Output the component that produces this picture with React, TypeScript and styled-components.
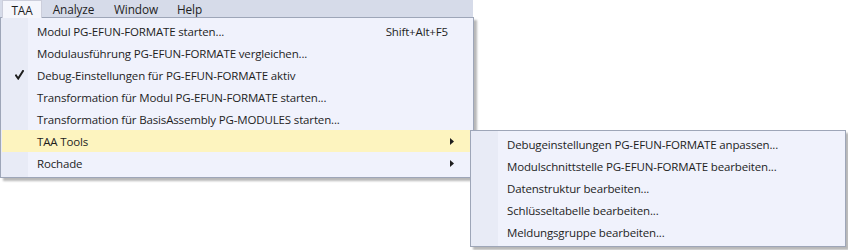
import React from "react";
import styled, { createGlobalStyle } from "styled-components";

const Global = createGlobalStyle`
  html, body { margin: 0; padding: 0; background: #ffffff; }
  body { font-family: "Open Sans", "Noto Sans", sans-serif; font-size: 12px; color: #1e1e1e; }
`;

const Page = styled.div`
  position: relative;
  width: 848px;
  height: 250px;
  background: #ffffff;
  overflow: hidden;
`;

const MenuBar = styled.div`
  display: flex;
  align-items: stretch;
  width: 473px;
  height: 17px;
  background: #d6dbe9;
  padding-left: 2px;
  box-sizing: border-box;
`;

const BarItem = styled.div<{ $open?: boolean; $w: number }>`
  width: ${(p) => p.$w}px;
  box-sizing: border-box;
  display: flex;
  align-items: center;
  justify-content: center;
  height: ${(p) => (p.$open ? "18px" : "17px")};
  background: ${(p) => (p.$open ? "#f5f6fc" : "transparent")};
  border: 1px solid ${(p) => (p.$open ? "#cccedb" : "transparent")};
  border-bottom: none;
  position: relative;
  z-index: 3;
  font-size: 11.8px;
  letter-spacing: -0.1px;
  line-height: 16px;
`;

const Dropdown = styled.div<{ $left: number; $top: number; $w: number }>`
  position: absolute;
  left: ${(p) => p.$left}px;
  top: ${(p) => p.$top}px;
  width: ${(p) => p.$w}px;
  box-sizing: border-box;
  background: linear-gradient(to right, #e8ebf6 0, #e8ebf6 27px, #f0f2fc 27px);
  border: 1px solid #9ea6b8;
  padding: 2px 1px 3px 1px;
  box-shadow: 3px 3px 2px rgba(0, 0, 0, 0.28);
  z-index: 2;
`;

const Item = styled.div<{ $hl?: boolean }>`
  display: grid;
  grid-template-columns: 33px 1fr auto 24px;
  align-items: center;
  height: 22px;
  background: ${(p) => (p.$hl ? "#fdf4bf" : "transparent")};
  font-size: 11.5px;
  letter-spacing: -0.15px;
  white-space: nowrap;
`;

const Check = styled.span`
  display: flex;
  justify-content: center;
  padding-left: 2px;
`;

const Label = styled.span`
  padding-left: 2px;
`;

const Shortcut = styled.span`
  padding-right: 0px;
`;

const Arrow = styled.span`
  display: flex;
  justify-content: flex-start;
  padding-left: 2px;
`;

const SubArrow = () => (
  <svg width="4" height="7" viewBox="0 0 4 7">
    <path d="M0 0 L4 3.5 L0 7 Z" fill="#1e1e1e" />
  </svg>
);

const CheckMark = () => (
  <svg width="9" height="10" viewBox="0 0 9 10">
    <path d="M1 5.5 L3.2 8.5 L8 1" fill="none" stroke="#1e1e1e" strokeWidth="2" strokeLinecap="square" strokeLinejoin="miter" />
  </svg>
);

const mainItems: { label: string; shortcut?: string; check?: boolean; sub?: boolean; hl?: boolean }[] = [
  { label: "Modul PG-EFUN-FORMATE starten...", shortcut: "Shift+Alt+F5" },
  { label: "Modulausführung PG-EFUN-FORMATE vergleichen..." },
  { label: "Debug-Einstellungen für PG-EFUN-FORMATE aktiv", check: true },
  { label: "Transformation für Modul PG-EFUN-FORMATE starten..." },
  { label: "Transformation für BasisAssembly PG-MODULES starten..." },
  { label: "TAA Tools", sub: true, hl: true },
  { label: "Rochade", sub: true },
];

const subItems = [
  "Debugeinstellungen PG-EFUN-FORMATE anpassen...",
  "Modulschnittstelle PG-EFUN-FORMATE bearbeiten...",
  "Datenstruktur bearbeiten...",
  "Schlüsseltabelle bearbeiten...",
  "Meldungsgruppe bearbeiten...",
];

export default function App() {
  return (
    <Page>
      <Global />
      <MenuBar>
        <BarItem $open $w={40}>TAA</BarItem>
        <BarItem $w={63}>Analyze</BarItem>
        <BarItem $w={62}>Window</BarItem>
        <BarItem $w={45}>Help</BarItem>
      </MenuBar>
      <Dropdown $left={0} $top={17} $w={474}>
        {mainItems.map((it) => (
          <Item key={it.label} $hl={it.hl}>
            <Check>{it.check ? <CheckMark /> : null}</Check>
            <Label>{it.label}</Label>
            <Shortcut>{it.shortcut ?? ""}</Shortcut>
            <Arrow>{it.sub ? <SubArrow /> : null}</Arrow>
          </Item>
        ))}
      </Dropdown>
      <Dropdown $left={470} $top={130} $w={376}>
        {subItems.map((s) => (
          <Item key={s}>
            <Check />
            <Label>{s}</Label>
            <Shortcut />
            <Arrow />
          </Item>
        ))}
      </Dropdown>
    </Page>
  );
}
